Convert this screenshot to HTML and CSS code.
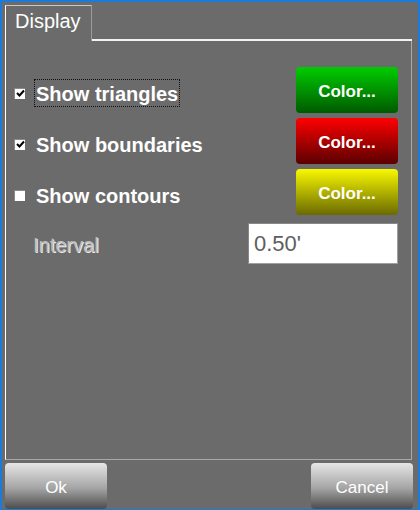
FILE: index.html
```html
<!DOCTYPE html>
<html lang="en">
<head>
    <meta charset="UTF-8">
    <meta name="viewport" content="width=device-width, initial-scale=1.0">
    <title>Display</title>
    <link rel="stylesheet" href="styles.css">
</head>
<body>
    <div class="window">
        <!-- Tab strip -->
        <div class="tabs">
            <div class="tab">Display</div>
            <div class="tab-rest"></div>
        </div>

        <!-- Tab page -->
        <div class="panel">
            <div class="row">
                <label class="check focused">
                    <span class="box"><svg width="9" height="9" viewBox="0 0 9 9"><path d="M1 4 L3.5 6.5 L8 1.5" fill="none" stroke="#000" stroke-width="2"/></svg></span>
                    <span class="check-text">Show triangles</span>
                </label>
                <button class="color-btn green">Color...</button>
            </div>
            <div class="row">
                <label class="check">
                    <span class="box"><svg width="9" height="9" viewBox="0 0 9 9"><path d="M1 4 L3.5 6.5 L8 1.5" fill="none" stroke="#000" stroke-width="2"/></svg></span>
                    <span class="check-text">Show boundaries</span>
                </label>
                <button class="color-btn red">Color...</button>
            </div>
            <div class="row">
                <label class="check">
                    <span class="box"></span>
                    <span class="check-text">Show contours</span>
                </label>
                <button class="color-btn yellow">Color...</button>
            </div>
            <div class="interval-row">
                <span class="interval-label">Interval</span>
                <input type="text" class="interval-input" value="0.50'">
            </div>
        </div>

        <!-- Buttons -->
        <div class="footer">
            <button class="gray-btn">Ok</button>
            <button class="gray-btn">Cancel</button>
        </div>
    </div>
</body>
</html>
```

FILE: styles.css
```css
* {
    margin: 0;
    padding: 0;
    box-sizing: border-box;
    font-family: "Liberation Sans", Arial, sans-serif;
}
body {
    background: #6b6b6b;
    width: 420px;
    height: 510px;
    overflow: hidden;
}
.window {
    width: 420px;
    height: 510px;
    display: flex;
    flex-direction: column;
    background: #6b6b6b;
    border: 2px solid #1c7ad8;
    border-bottom-width: 1px;
    padding: 3px 6px 0 3px;
}
.tabs {
    display: flex;
    height: 36px;
}
.tab {
    width: 87px;
    height: 36px;
    border-top: 1px solid #c8c8c8;
    border-left: 1px solid #fff;
    border-right: 1px solid #9a9a9a;
    color: #fff;
    font-size: 20px;
    padding: 4px 0 0 9px;
}
.tab-rest {
    flex: 1;
    border-bottom: 2px solid #f2f2f2;
}
.panel {
    flex: 1;
    border-left: 1px solid #fff;
    border-right: 1px solid #a8a8a8;
    border-bottom: 1px solid #a8a8a8;
    padding: 26px 13px 0 8px;
    display: flex;
    flex-direction: column;
    gap: 5px;
}
.row {
    display: flex;
    align-items: center;
    justify-content: space-between;
    height: 46px;
}
.check {
    display: flex;
    align-items: center;
    gap: 9px;
    margin-top: 6px;
    color: #fff;
}
.box {
    width: 11px;
    height: 11px;
    background: #fff;
    border-top: 1px solid #8a8a8a;
    border-left: 1px solid #8a8a8a;
    display: flex;
    align-items: center;
    justify-content: center;
}
.box svg {
    display: block;
}
.check-text {
    font-size: 20px;
    line-height: 20px;
    font-weight: bold;
    padding: 4px 1px 2px 1px;
    border: 1px dotted transparent;
}
.focused .check-text {
    border-color: #111;
}
.color-btn {
    width: 102px;
    height: 46px;
    border: none;
    border-radius: 4px;
    color: #fff;
    font-size: 17px;
    font-weight: bold;
    padding-top: 3px;
    cursor: pointer;
}
.green {
    background: linear-gradient(#00cc00, #005a00);
}
.red {
    background: linear-gradient(#ff0000, #5a0000);
}
.yellow {
    background: linear-gradient(#f8f800, #6a6a00);
}
.interval-row {
    display: flex;
    align-items: center;
    justify-content: space-between;
    margin-top: 3px;
    padding-left: 19px;
}
.interval-label {
    font-size: 20px;
    color: #bcbcbc;
    text-shadow: 1px 1px 0 #ececec;
    padding-top: 4px;
}
.interval-input {
    width: 150px;
    height: 41px;
    border: 1px solid #a0a0a0;
    border-top-color: #888;
    border-left-color: #888;
    background: #fff;
    color: #5e5e5e;
    font-size: 22px;
    padding: 0 5px;
    outline: none;
}
.footer {
    display: flex;
    justify-content: space-between;
    padding: 3px 0 0 0;
    margin-right: -1px;
    height: 49px;
}
.gray-btn {
    width: 102px;
    height: 46px;
    border: none;
    border-radius: 4px;
    background: linear-gradient(#e6e6e6, #a4a4a4 55%, #4c4c4c);
    color: #fff;
    font-size: 17px;
    padding-top: 3px;
    cursor: pointer;
}
```
